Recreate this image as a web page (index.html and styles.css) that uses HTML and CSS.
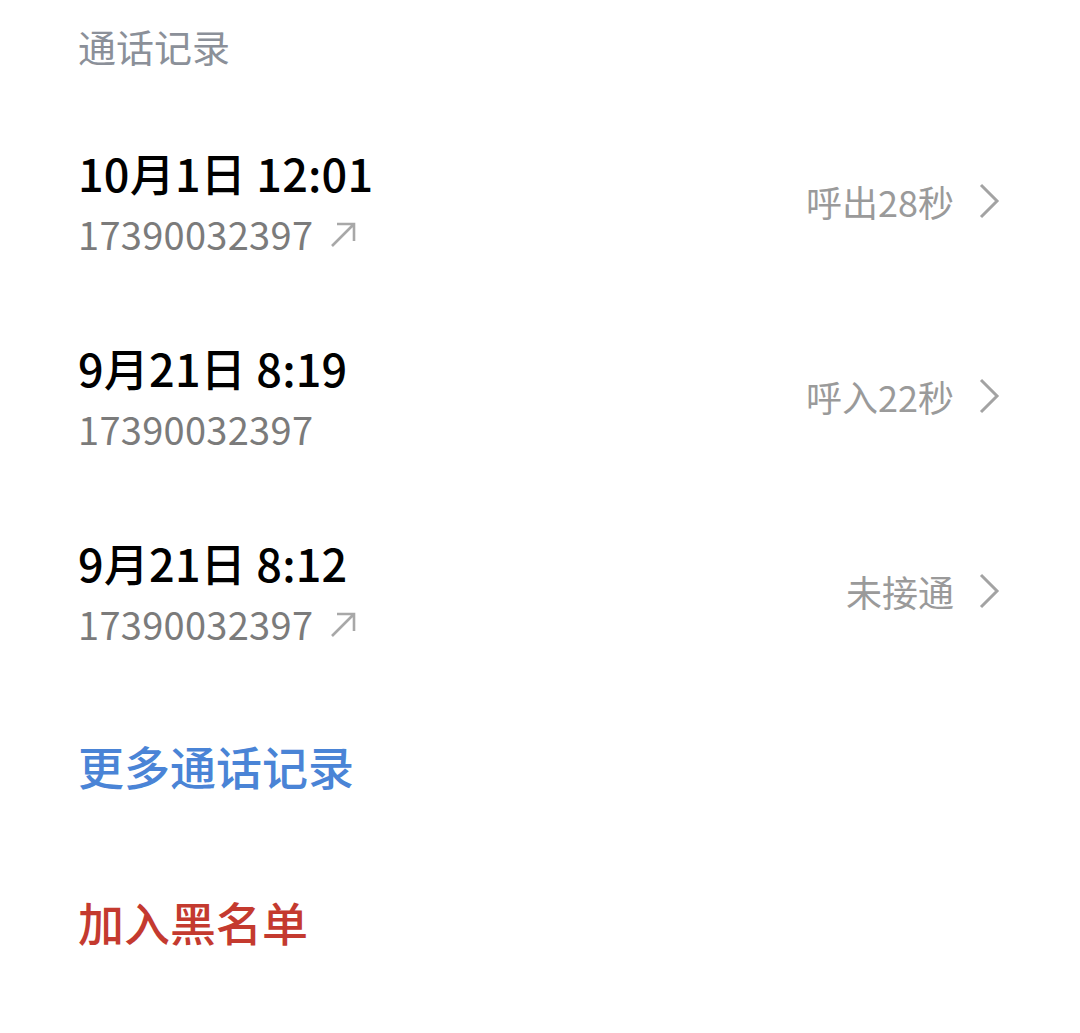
FILE: index.html
```html
<!DOCTYPE html>
<html lang="zh">
<head>
<meta charset="utf-8">
<link rel="stylesheet" href="styles.css">
</head>
<body>
<div class="page">
  <div class="section-title">通话记录</div>
  <div class="list">
    <div class="row">
      <div class="left">
        <div class="time">10月1日 12:01</div>
        <div class="num">17390032397<svg class="out" viewBox="0 0 28 28"><path d="M3 26 L25 4 M8 4 H25 V21" fill="none" stroke="#a8a8a8" stroke-width="2.6"/></svg></div>
      </div>
      <div class="right"><span>呼出28秒</span><svg class="chev" viewBox="0 0 22 36"><path d="M3 2 L19 18 L3 34" fill="none" stroke="#a3a3a3" stroke-width="3"/></svg></div>
    </div>
    <div class="row">
      <div class="left">
        <div class="time">9月21日 8:19</div>
        <div class="num">17390032397</div>
      </div>
      <div class="right"><span>呼入22秒</span><svg class="chev" viewBox="0 0 22 36"><path d="M3 2 L19 18 L3 34" fill="none" stroke="#a3a3a3" stroke-width="3"/></svg></div>
    </div>
    <div class="row">
      <div class="left">
        <div class="time">9月21日 8:12</div>
        <div class="num">17390032397<svg class="out" viewBox="0 0 28 28"><path d="M3 26 L25 4 M8 4 H25 V21" fill="none" stroke="#a8a8a8" stroke-width="2.6"/></svg></div>
      </div>
      <div class="right"><span>未接通</span><svg class="chev" viewBox="0 0 22 36"><path d="M3 2 L19 18 L3 34" fill="none" stroke="#a3a3a3" stroke-width="3"/></svg></div>
    </div>
  </div>
  <div class="action more">更多通话记录</div>
  <div class="action block">加入黑名单</div>
</div>
</body>
</html>
```
FILE: styles.css
```css
html, body {
  margin: 0;
  padding: 0;
  background: #ffffff;
}
body {
  font-family: "Noto Sans CJK SC", "Noto Sans", sans-serif;
  width: 1080px;
  height: 1033px;
  overflow: hidden;
}
.page {
  padding: 21px 80px 0 78px;
}
.section-title {
  font-size: 38px;
  line-height: 50px;
  color: #8b9099;
}
.list {
  margin-top: 35px;
  display: flex;
  flex-direction: column;
}
.row {
  display: flex;
  align-items: center;
  justify-content: space-between;
  padding: 39px 0 38px;
}
.left {
  display: flex;
  flex-direction: column;
}
.time {
  font-size: 45px;
  line-height: 56px;
  font-weight: 500;
  letter-spacing: 0.2px;
  color: #000000;
}
.num {
  margin-top: 4px;
  font-size: 38px;
  line-height: 58px;
  letter-spacing: 0.3px;
  color: #7b7b7b;
  display: flex;
  align-items: center;
  gap: 16px;
}
.out {
  width: 28px;
  height: 28px;
}
.right {
  display: flex;
  align-items: center;
  gap: 24px;
  font-size: 36px;
  color: #9a9a9a;
  margin-top: -6px;
}
.chev {
  width: 22px;
  height: 36px;
}
.action {
  font-size: 46px;
  line-height: 58px;
  font-weight: 500;
}
.more {
  margin-top: 45px;
  color: #4a84d6;
}
.block {
  margin-top: 98px;
  color: #c43a2f;
}
```
